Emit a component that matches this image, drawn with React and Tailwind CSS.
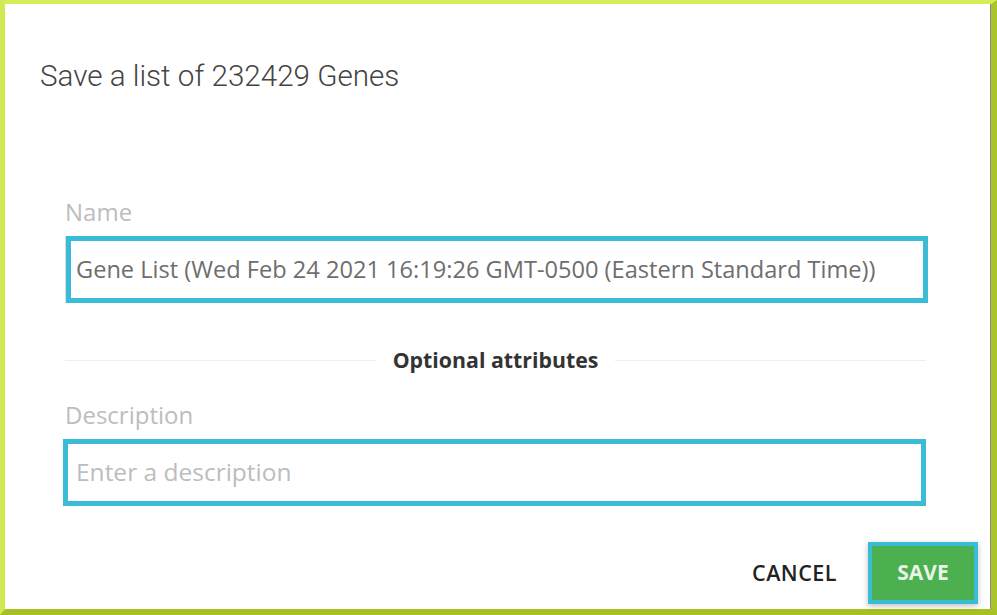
export default function App() {
  return (
    <div className="w-[997px] h-[615px] bg-white border-t-[4px] border-l-[5px] border-r-[6px] border-b-[6px] border-t-[#d5ee58] border-l-[#d0ea52] border-r-[#a9c52a] border-b-[#a7c026] flex flex-col" style={{ fontFamily: '"Open Sans", sans-serif' }}>
      <div className="flex-1 flex flex-col border-r border-[#8a8a8a]">
        <h2 className="pl-[35px] pt-[53px] text-[29.6px] leading-[38px] font-light text-[#444]" style={{ fontFamily: 'Roboto, sans-serif' }}>
          Save a list of 232429 Genes
        </h2>

        <div className="pl-[60px] pr-[64px] pt-[101px]">
          <label className="block text-[24px] leading-[32px] text-[#bdbdbd]">Name</label>
          <div className="mt-[8px] ml-[1px] mr-[-2px] h-[67px] border-[5px] border-[#3bbcd6] flex items-center pl-[5px] shadow-[-1px_0_0_#ddd]">
            <span className="text-[23.6px] text-[#6e6e6e] whitespace-nowrap">Gene List (Wed Feb 24 2021 16:19:26 GMT-0500 (Eastern Standard Time))</span>
          </div>

          <div className="mt-[42px] flex items-center gap-[17px]">
            <div className="flex-1 h-px bg-[#eeeeee]" />
            <span className="text-[21.3px] leading-[30px] font-bold text-[#333]">Optional attributes</span>
            <div className="flex-1 h-px bg-[#eeeeee]" />
          </div>

          <label className="block mt-[24px] text-[24px] leading-[32px] text-[#bdbdbd]">Description</label>
          <div className="mt-[8px] ml-[-2px] h-[67px] border-[5px] border-[#3bbcd6] flex items-center pl-[8px]">
            <span className="text-[24.5px] text-[#bdbdbd]">Enter a description</span>
          </div>
        </div>

        <div className="mt-auto mb-[5px] flex items-center justify-end pr-[12px] gap-[31px]">
          <button className="text-[21.5px] font-semibold text-[#222] tracking-[0.5px]">CANCEL</button>
          <button className="w-[110px] h-[62px] border-[4px] border-[#3bbcd6] bg-[#4caf50] text-[21px] font-bold text-[#e8f5e9] shadow-[0_2px_6px_rgba(0,0,0,0.25)]">SAVE</button>
        </div>
      </div>
    </div>
  );
}
